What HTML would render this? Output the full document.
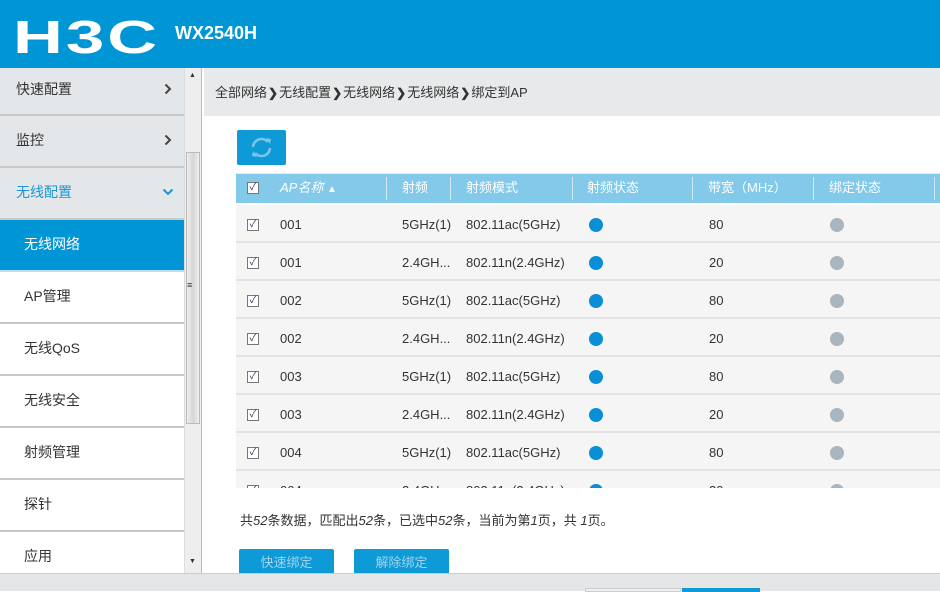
<!DOCTYPE html>
<html><head><meta charset="utf-8"><style>
*{margin:0;padding:0;box-sizing:border-box}
body{width:940px;height:591px;overflow:hidden;position:relative;background:#fff;font-family:"Liberation Sans","Noto Sans CJK SC",sans-serif;font-size:13px;color:#333}
.hdr{position:absolute;left:0;top:0;width:940px;height:68px;background:#0095d5}
.logo{position:absolute;left:13px;top:14px;color:#fff;font:bold 46px/46px "Liberation Sans",sans-serif;letter-spacing:2px;transform:scaleX(1.5);transform-origin:left top}
.model{position:absolute;left:175px;top:23px;color:#fff;font:bold 18px "Liberation Sans",sans-serif}
.side{position:absolute;left:0;top:68px;width:184px;height:505px;background:#fff;overflow:hidden}
.it{height:52px;line-height:48px;border-bottom:2px solid #c8c8c8;padding-left:16px;position:relative;font-size:14px}
.g{background:#e4e7e9}
.sub{padding-left:24px;background:#fff}
.act{background:#0095d5;color:#fff;border-bottom-color:#b8dff2}
.arr{position:absolute;right:12px;top:18px}
.sb{position:absolute;left:184px;top:68px;width:18px;height:505px;background:#eee;border-left:1px solid #ddd;border-right:1px solid #bbb}
.thumb{position:absolute;left:1px;top:84px;width:14px;height:272px;background:linear-gradient(90deg,#eee,#d6d6d6,#eee);border:1px solid #bbb}
.bc{position:absolute;left:204px;top:68px;width:736px;height:48px;background:#e8e9ea;line-height:50px;padding-left:11px;font-size:13px}
.bc b{margin:0 1px;font-size:12px}
.rf{position:absolute;left:237px;top:130px;width:49px;height:35px;background:#0e9ad7;border-radius:2px}
.tbl{position:absolute;left:236px;top:173px;width:704px;height:315px;overflow:hidden;background:#f5f5f5}
.th{height:30px;background:#82c9ea;color:#fff;position:relative;border-top:1px solid #e0eef5}
.th span,.tr span{position:absolute;top:0;line-height:28px}
.dv{position:absolute;top:3px;width:1px;height:23px;background:#d0e9f5}
.tr{height:38px;border-bottom:2px solid #e3e3e3;position:relative}
.tr span{line-height:40px}
.cb{position:absolute;left:11px;width:12px;height:12px;border:1px solid #777;background:#fff;font-size:10px;line-height:10px;text-align:center;color:#335}
.dot{position:absolute;width:14px;height:14px;border-radius:50%;top:13px}
.sum{position:absolute;left:240px;top:510px;font-size:13px}
.btn{position:absolute;top:549px;width:95px;height:24px;background:#0e9ad7;color:#9fd3ee;text-align:center;line-height:28px;font-size:13px;border-radius:2px 2px 0 0}
.bot{position:absolute;left:0;top:573px;width:940px;height:18px;background:#e4e6e8;border-top:1px solid #ccc}
</style></head><body>
<div class="hdr"><div class="logo">H3C</div><div class="model">WX2540H</div></div>
<div class="side">
<div class="it g" style="height:48px;line-height:43px">快速配置<svg class="arr" style="top:15px" width="8" height="12" viewBox="0 0 8 12"><path d="M1.5 1.5l4.5 4.5-4.5 4.5" fill="none" stroke="#444" stroke-width="2"/></svg></div>
<div class="it g">监控<svg class="arr" width="8" height="12" viewBox="0 0 8 12"><path d="M1.5 1.5l4.5 4.5-4.5 4.5" fill="none" stroke="#444" stroke-width="2"/></svg></div>
<div class="it g" style="color:#1a95d2">无线配置<svg class="arr" style="top:20px;right:10px" width="12" height="8" viewBox="0 0 12 8"><path d="M1.5 1.5l4.5 4.5 4.5-4.5" fill="none" stroke="#1a95d2" stroke-width="2"/></svg></div>
<div class="it sub act">无线网络</div>
<div class="it sub">AP管理</div>
<div class="it sub">无线QoS</div>
<div class="it sub">无线安全</div>
<div class="it sub">射频管理</div>
<div class="it sub">探针</div>
<div class="it sub" style="border:0">应用</div>
</div>
<div class="sb"><div style="position:absolute;left:4px;top:4px;font-size:7px">▲</div><div class="thumb"></div><div style="position:absolute;left:2px;top:212px;font-size:9px">≡</div><div style="position:absolute;left:4px;top:490px;font-size:7px">▼</div></div>
<div class="bc">全部网络<b>❯</b>无线配置<b>❯</b>无线网络<b>❯</b>无线网络<b>❯</b>绑定到AP</div>
<div class="rf"><svg width="49" height="35" viewBox="0 0 49 35"><g fill="none" stroke="#7cc5ea" stroke-width="2.5"><path d="M16 17a8.5 8.5 0 0 1 15-5"/><path d="M33 18a8.5 8.5 0 0 1-15 5"/></g><path d="M29 8l5 1-1 5z M20 27l-5-1 1-5z" fill="#7cc5ea"/></svg></div>
<div class="tbl">
<div class="th"><div class="cb" style="top:8px">✓</div>
<span style="left:44px;font-style:italic">AP名称 <span style="position:static;font-size:10px;font-style:normal">▲</span></span>
<div class="dv" style="left:150px"></div><span style="left:166px">射频</span>
<div class="dv" style="left:214px"></div><span style="left:230px">射频模式</span>
<div class="dv" style="left:336px"></div><span style="left:351px">射频状态</span>
<div class="dv" style="left:456px"></div><span style="left:472px">带宽（MHz）</span>
<div class="dv" style="left:577px"></div><span style="left:593px">绑定状态</span>
<div class="dv" style="left:698px"></div>
</div>
<div style="height:2px;background:#fff"></div>
<div class="tr"><div class="cb" style="top:14px">✓</div><span style="left:44px">001</span><span style="left:166px">5GHz(1)</span><span style="left:230px">802.11ac(5GHz)</span><div class="dot" style="left:353px;background:#0a8fd6"></div><span style="left:473px">80</span><div class="dot" style="left:594px;background:#a9b5bf"></div></div>
<div class="tr"><div class="cb" style="top:14px">✓</div><span style="left:44px">001</span><span style="left:166px">2.4GH...</span><span style="left:230px">802.11n(2.4GHz)</span><div class="dot" style="left:353px;background:#0a8fd6"></div><span style="left:473px">20</span><div class="dot" style="left:594px;background:#a9b5bf"></div></div>
<div class="tr"><div class="cb" style="top:14px">✓</div><span style="left:44px">002</span><span style="left:166px">5GHz(1)</span><span style="left:230px">802.11ac(5GHz)</span><div class="dot" style="left:353px;background:#0a8fd6"></div><span style="left:473px">80</span><div class="dot" style="left:594px;background:#a9b5bf"></div></div>
<div class="tr"><div class="cb" style="top:14px">✓</div><span style="left:44px">002</span><span style="left:166px">2.4GH...</span><span style="left:230px">802.11n(2.4GHz)</span><div class="dot" style="left:353px;background:#0a8fd6"></div><span style="left:473px">20</span><div class="dot" style="left:594px;background:#a9b5bf"></div></div>
<div class="tr"><div class="cb" style="top:14px">✓</div><span style="left:44px">003</span><span style="left:166px">5GHz(1)</span><span style="left:230px">802.11ac(5GHz)</span><div class="dot" style="left:353px;background:#0a8fd6"></div><span style="left:473px">80</span><div class="dot" style="left:594px;background:#a9b5bf"></div></div>
<div class="tr"><div class="cb" style="top:14px">✓</div><span style="left:44px">003</span><span style="left:166px">2.4GH...</span><span style="left:230px">802.11n(2.4GHz)</span><div class="dot" style="left:353px;background:#0a8fd6"></div><span style="left:473px">20</span><div class="dot" style="left:594px;background:#a9b5bf"></div></div>
<div class="tr"><div class="cb" style="top:14px">✓</div><span style="left:44px">004</span><span style="left:166px">5GHz(1)</span><span style="left:230px">802.11ac(5GHz)</span><div class="dot" style="left:353px;background:#0a8fd6"></div><span style="left:473px">80</span><div class="dot" style="left:594px;background:#a9b5bf"></div></div>
<div class="tr"><div class="cb" style="top:14px">✓</div><span style="left:44px">004</span><span style="left:166px">2.4GH...</span><span style="left:230px">802.11n(2.4GHz)</span><div class="dot" style="left:353px;background:#0a8fd6"></div><span style="left:473px">20</span><div class="dot" style="left:594px;background:#a9b5bf"></div></div>
</div>
<div class="sum">共<i>52</i>条数据，匹配出<i>52</i>条，已选中<i>52</i>条，当前为第<i>1</i>页，共 <i>1</i>页。</div>
<div class="btn" style="left:239px">快速绑定</div>
<div class="btn" style="left:354px">解除绑定</div>
<div class="bot"><div style="position:absolute;left:585px;top:14px;width:96px;height:4px;background:#f0f0f0;border:1px solid #ccc"></div><div style="position:absolute;left:682px;top:14px;width:78px;height:4px;background:#0e9ad7"></div></div>
</body></html>
